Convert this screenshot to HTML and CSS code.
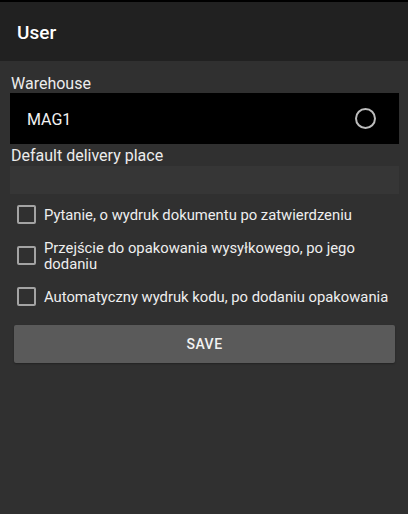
FILE: index.html
```html
<!DOCTYPE html>
<html>
<head>
<meta charset="utf-8">
<link rel="stylesheet" href="styles.css">
</head>
<body>
<div class="statusbar"></div>
<header class="toolbar"><span class="title">User</span></header>
<main class="content">
  <label class="field-label">Warehouse</label>
  <div class="select">
    <span class="select-value">MAG1</span>
    <span class="radio"></span>
  </div>
  <label class="field-label second">Default delivery place</label>
  <div class="input"></div>
  <div class="checks">
    <div class="check-row"><span class="box"></span><span class="check-text">Pytanie, o wydruk dokumentu po zatwierdzeniu</span></div>
    <div class="check-row"><span class="box"></span><span class="check-text">Przejście do opakowania wysyłkowego, po jego dodaniu</span></div>
    <div class="check-row"><span class="box"></span><span class="check-text">Automatyczny wydruk kodu, po dodaniu opakowania</span></div>
  </div>
  <button class="save">SAVE</button>
</main>
</body>
</html>
```
FILE: styles.css
```css
html, body {
  margin: 0;
  padding: 0;
  background: #303030;
  font-family: Roboto, "Noto Sans", sans-serif;
  color: #eeeeee;
}
body {
  width: 408px;
  height: 514px;
  overflow: hidden;
}
.statusbar {
  height: 2px;
  background: #000;
}
.toolbar {
  height: 59px;
  background: #212121;
  box-sizing: border-box;
  padding: 20px 0 0 17px;
}
.title {
  font-size: 19px;
  font-weight: 500;
  color: #ffffff;
  line-height: 22px;
}
.content {
  display: flex;
  flex-direction: column;
  padding: 13px 9px 0 10px;
}
.field-label {
  font-size: 16px;
  line-height: 19px;
  padding-left: 1px;
  color: #ececec;
}
.field-label.second {
  margin-top: 2px;
  line-height: 20px;
}
.select {
  height: 51px;
  background: #000;
  display: flex;
  align-items: center;
  justify-content: space-between;
  padding: 2px 23px 0 17px;
  box-sizing: border-box;
}
.select-value {
  font-size: 16px;
  color: #f2f2f2;
}
.radio {
  width: 17px;
  height: 17px;
  border: 2px solid #bdbdbd;
  border-radius: 50%;
  margin-top: -2px;
}
.input {
  height: 28px;
  background: #363636;
}
.checks {
  display: flex;
  flex-direction: column;
}
.check-row {
  min-height: 41px;
  display: flex;
  align-items: center;
  gap: 8px;
  padding-left: 7px;
}
.box {
  flex: none;
  width: 15px;
  height: 15px;
  border: 2px solid #a3a3a3;
  border-radius: 2px;
}
.check-text {
  font-size: 14.8px;
  line-height: 16px;
  color: #eeeeee;
}
.save {
  margin: 8px 4px 0 4px;
  height: 38px;
  background: #5a5a5a;
  border: none;
  border-radius: 2px;
  box-shadow: 0 1px 2px rgba(0,0,0,0.3);
  font-family: Roboto, sans-serif;
  font-size: 14px;
  font-weight: 500;
  letter-spacing: 0.5px;
  color: #f2f2f2;
}
```
